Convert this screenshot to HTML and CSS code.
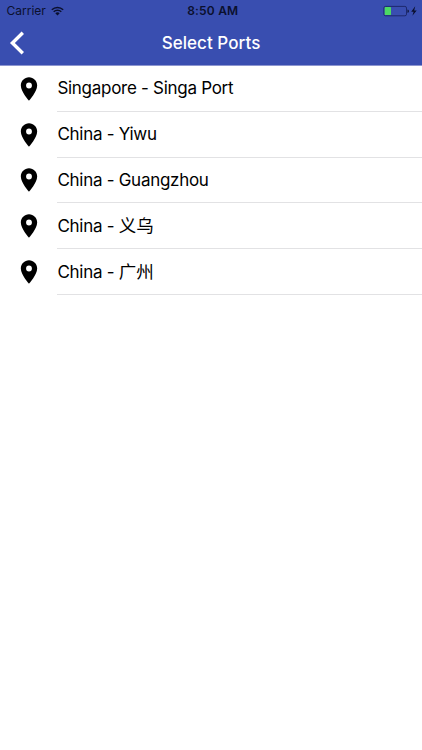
FILE: index.html
```html
<!DOCTYPE html>
<html lang="en">
<head>
    <meta charset="UTF-8">
    <meta name="viewport" content="width=device-width, initial-scale=1.0">
    <title>Select Ports</title>
    <link rel="stylesheet" href="styles.css">
</head>
<body>
    <svg class="sprite" aria-hidden="true">
        <symbol id="pin" viewBox="0 0 24 24">
            <path d="M12 2C8.13 2 5 5.13 5 9c0 5.25 7 13 7 13s7-7.75 7-13c0-3.87-3.13-7-7-7zm0 9.5a2.5 2.5 0 0 1 0-5 2.5 2.5 0 0 1 0 5z"/>
        </symbol>
    </svg>

    <header class="header">
        <div class="status-bar">
            <div class="status-left">
                <span class="carrier">Carrier</span>
                <svg class="wifi" width="13" height="10" viewBox="0 0 13 10">
                    <path d="M.8 3.7a8.2 8.2 0 0 1 11.4 0M2.7 5.8a5.5 5.5 0 0 1 7.6 0" fill="none" stroke="currentColor" stroke-width="1.5"/>
                    <path d="M6.5 9.4L4.3 7.3a3.1 3.1 0 0 1 4.4 0z" fill="currentColor"/>
                </svg>
            </div>
            <span class="time">8:50 AM</span>
            <div class="status-right">
                <svg width="35" height="12" viewBox="0 0 35 12">
                    <rect x=".9" y="1.4" width="22.6" height="9.4" rx="1.6" fill="none" stroke="#17205c" stroke-width=".8"/>
                    <rect x="1.7" y="2.1" width="6.3" height="8" rx=".7" fill="#4cd964"/>
                    <path d="M24.5 4.4c1.8.3 1.8 3.1 0 3.4z" fill="#0b102e"/>
                    <path d="M32.2 1.2l-4 5.5h2.4l-1.2 4.1 4.3-5.4h-2.5z" fill="#0b102e"/>
                </svg>
            </div>
        </div>
        <div class="nav-bar">
            <a class="back" href="#" aria-label="Back">
                <svg width="16" height="26" viewBox="0 0 16 26">
                    <path d="M13.8 2.8L3.4 13l10.4 10.2" fill="none" stroke="#fff" stroke-width="3.4"/>
                </svg>
            </a>
            <h1 class="title">Select Ports</h1>
        </div>
    </header>

    <ul class="port-list">
        <li class="port"><svg class="pin"><use href="#pin"/></svg><span class="port-name">Singapore - Singa Port</span></li>
        <li class="port"><svg class="pin"><use href="#pin"/></svg><span class="port-name">China - Yiwu</span></li>
        <li class="port"><svg class="pin"><use href="#pin"/></svg><span class="port-name">China - Guangzhou</span></li>
        <li class="port"><svg class="pin"><use href="#pin"/></svg><span class="port-name">China - <span class="zh" lang="zh">义乌</span></span></li>
        <li class="port"><svg class="pin"><use href="#pin"/></svg><span class="port-name">China - <span class="zh" lang="zh">广州</span></span></li>
    </ul>
</body>
</html>
```
FILE: styles.css
```css
* {
    box-sizing: border-box;
}

body {
    margin: 0;
    background: #fff;
    color: #000;
    font-family: Inter, "Noto Sans CJK SC", sans-serif;
}

.sprite {
    display: none;
}

.header {
    height: 66px;
    background: #394eb0;
    border-bottom: 1px solid #8d96d0;
}

.status-bar {
    display: grid;
    grid-template-columns: 1fr auto 1fr;
    align-items: center;
    height: 21px;
    padding: 0 4px 0 6.5px;
    color: #0b102e;
    font-size: 12px;
}

.status-left {
    display: flex;
    align-items: center;
    gap: 5.5px;
}

.time {
    padding-left: 1px;
    font-weight: 600;
    letter-spacing: 0.2px;
}

.status-right {
    display: flex;
    justify-content: flex-end;
}

.nav-bar {
    display: grid;
    grid-template-columns: 40px 1fr 40px;
    align-items: center;
    height: 44px;
}

.back {
    display: flex;
    padding-left: 9px;
}

.title {
    margin: 0;
    color: #fff;
    font-size: 17px;
    font-weight: 500;
    letter-spacing: 0.05px;
    line-height: 22px;
    text-align: center;
}

.port-list {
    margin: 0;
    padding: 0;
    list-style: none;
}

.port {
    display: flex;
    align-items: center;
    height: 45.8px;
    padding-left: 14.5px;
}

.pin {
    width: 28px;
    height: 28px;
    margin-right: 14.9px;
}

.port-name {
    flex: 1;
    height: 100%;
    border-bottom: 1px solid #e2e2e4;
    font-size: 17px;
    letter-spacing: -0.28px;
    line-height: 45.4px;
}

.zh {
    font-size: 17.5px;
    letter-spacing: 0;
}
```
